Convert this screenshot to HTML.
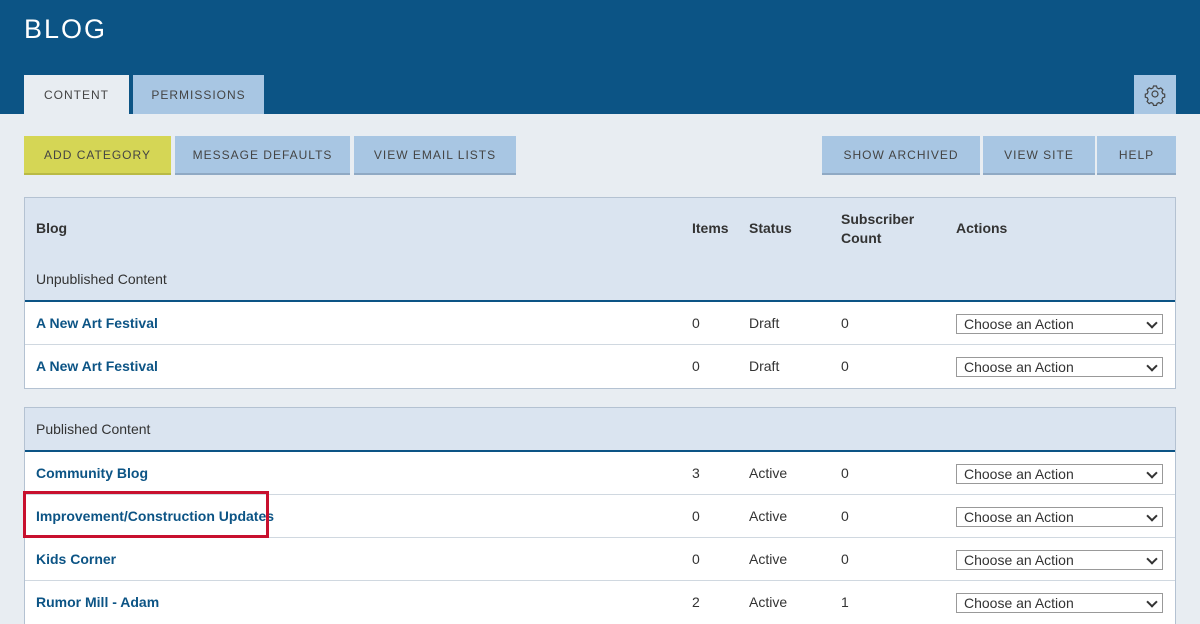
<!DOCTYPE html><html><head><style>
*{box-sizing:border-box;margin:0;padding:0}
body{width:1200px;height:622px;overflow:hidden;background:#e8edf2;font-family:"Liberation Sans",sans-serif;position:relative;color:#333}
.a{position:absolute}
.hdr{left:0;top:0;width:1200px;height:114px;background:#0c5485}
.title{left:24px;top:14px;color:#fff;font-size:27px;letter-spacing:2px}
.tab{top:75px;height:39px;font-size:12px;letter-spacing:1px;display:flex;align-items:center;justify-content:center;color:#444}
.btn{top:136px;height:39px;font-size:12px;letter-spacing:1px;display:flex;align-items:center;justify-content:center;color:#444;background:#a8c6e3;border-bottom:2px solid #8fa9c4}
.tbl{left:24px;width:1152px;border:1px solid #b4c2d2;background:#fff}
.th{background:#dae4f0;border-bottom:2px solid #0c5485;position:relative}
.row{position:relative;height:43px;border-bottom:1px solid #d0d8e0;font-size:14px}
.row:last-child{border-bottom:none}
.row span{position:absolute;top:13px}
.n{left:11px;color:#0c5485;font-weight:bold}
.i{left:667px}.s{left:724px}.c{left:816px}
.sel{position:absolute;left:931px;top:12px;width:207px;height:20px;border:1px solid #999;background:#fff;font-size:14px;padding-left:7px;line-height:18px;color:#333}
.sel:after{content:"";position:absolute;right:6px;top:4px;width:6px;height:6px;border-right:2px solid #333;border-bottom:2px solid #333;transform:rotate(45deg)}
.hb{font-weight:bold;font-size:14px;position:absolute;color:#333}
</style></head><body>
<div class="a hdr"></div>
<div class="a title">BLOG</div>
<div class="a tab" style="left:24px;width:105px;background:#e8edf2">CONTENT</div>
<div class="a tab" style="left:133px;width:131px;background:#a8c6e3">PERMISSIONS</div>
<div class="a" style="left:1134px;top:75px;width:42px;height:39px;background:#a8c6e3">
<svg width="42" height="39" viewBox="0 0 42 39"><g transform="translate(21,19)" fill="none" stroke="#444" stroke-width="1.2"><circle r="3"/><path d="M-1.5,-8 h3 l0.6,2 l1.8,0.8 l1.9,-1 l2.1,2.1 l-1,1.9 l0.8,1.8 l2,0.6 v3 l-2,0.6 l-0.8,1.8 l1,1.9 l-2.1,2.1 l-1.9,-1 l-1.8,0.8 l-0.6,2 h-3 l-0.6,-2 l-1.8,-0.8 l-1.9,1 l-2.1,-2.1 l1,-1.9 l-0.8,-1.8 l-2,-0.6 v-3 l2,-0.6 l0.8,-1.8 l-1,-1.9 l2.1,-2.1 l1.9,1 l1.8,-0.8 z"/></g></svg></div>
<div class="a btn" style="left:24px;width:147px;background:#d5d655;border-bottom-color:#b9ba45">ADD CATEGORY</div>
<div class="a btn" style="left:175px;width:175px">MESSAGE DEFAULTS</div>
<div class="a btn" style="left:354px;width:162px">VIEW EMAIL LISTS</div>
<div class="a btn" style="left:822px;width:158px">SHOW ARCHIVED</div>
<div class="a btn" style="left:983px;width:112px">VIEW SITE</div>
<div class="a btn" style="left:1097px;width:79px">HELP</div>

<div class="a tbl" style="top:197px">
<div class="th" style="height:104px">
<span class="hb" style="left:11px;top:22px">Blog</span>
<span class="hb" style="left:667px;top:22px">Items</span>
<span class="hb" style="left:724px;top:22px">Status</span>
<span class="hb" style="left:816px;top:12px;line-height:19px">Subscriber<br>Count</span>
<span class="hb" style="left:931px;top:22px">Actions</span>
<span style="position:absolute;left:11px;top:73px;font-size:14px">Unpublished Content</span>
</div>
<div class="row"><span class="n">A New Art Festival</span><span class="i">0</span><span class="s">Draft</span><span class="c">0</span><div class="sel">Choose an Action</div></div>
<div class="row"><span class="n">A New Art Festival</span><span class="i">0</span><span class="s">Draft</span><span class="c">0</span><div class="sel">Choose an Action</div></div>
</div>

<div class="a tbl" style="top:407px;border-bottom:none">
<div class="th" style="height:44px"><span style="position:absolute;left:11px;top:13px;font-size:14px">Published Content</span></div>
<div class="row"><span class="n">Community Blog</span><span class="i">3</span><span class="s">Active</span><span class="c">0</span><div class="sel">Choose an Action</div></div>
<div class="row"><span class="n">Improvement/Construction Updates</span><span class="i">0</span><span class="s">Active</span><span class="c">0</span><div class="sel">Choose an Action</div></div>
<div class="row"><span class="n">Kids Corner</span><span class="i">0</span><span class="s">Active</span><span class="c">0</span><div class="sel">Choose an Action</div></div>
<div class="row"><span class="n">Rumor Mill - Adam</span><span class="i">2</span><span class="s">Active</span><span class="c">1</span><div class="sel">Choose an Action</div></div>
</div>
<div class="a" style="left:23px;top:491px;width:246px;height:47px;border:3px solid #c8102e"></div>
</body></html>
